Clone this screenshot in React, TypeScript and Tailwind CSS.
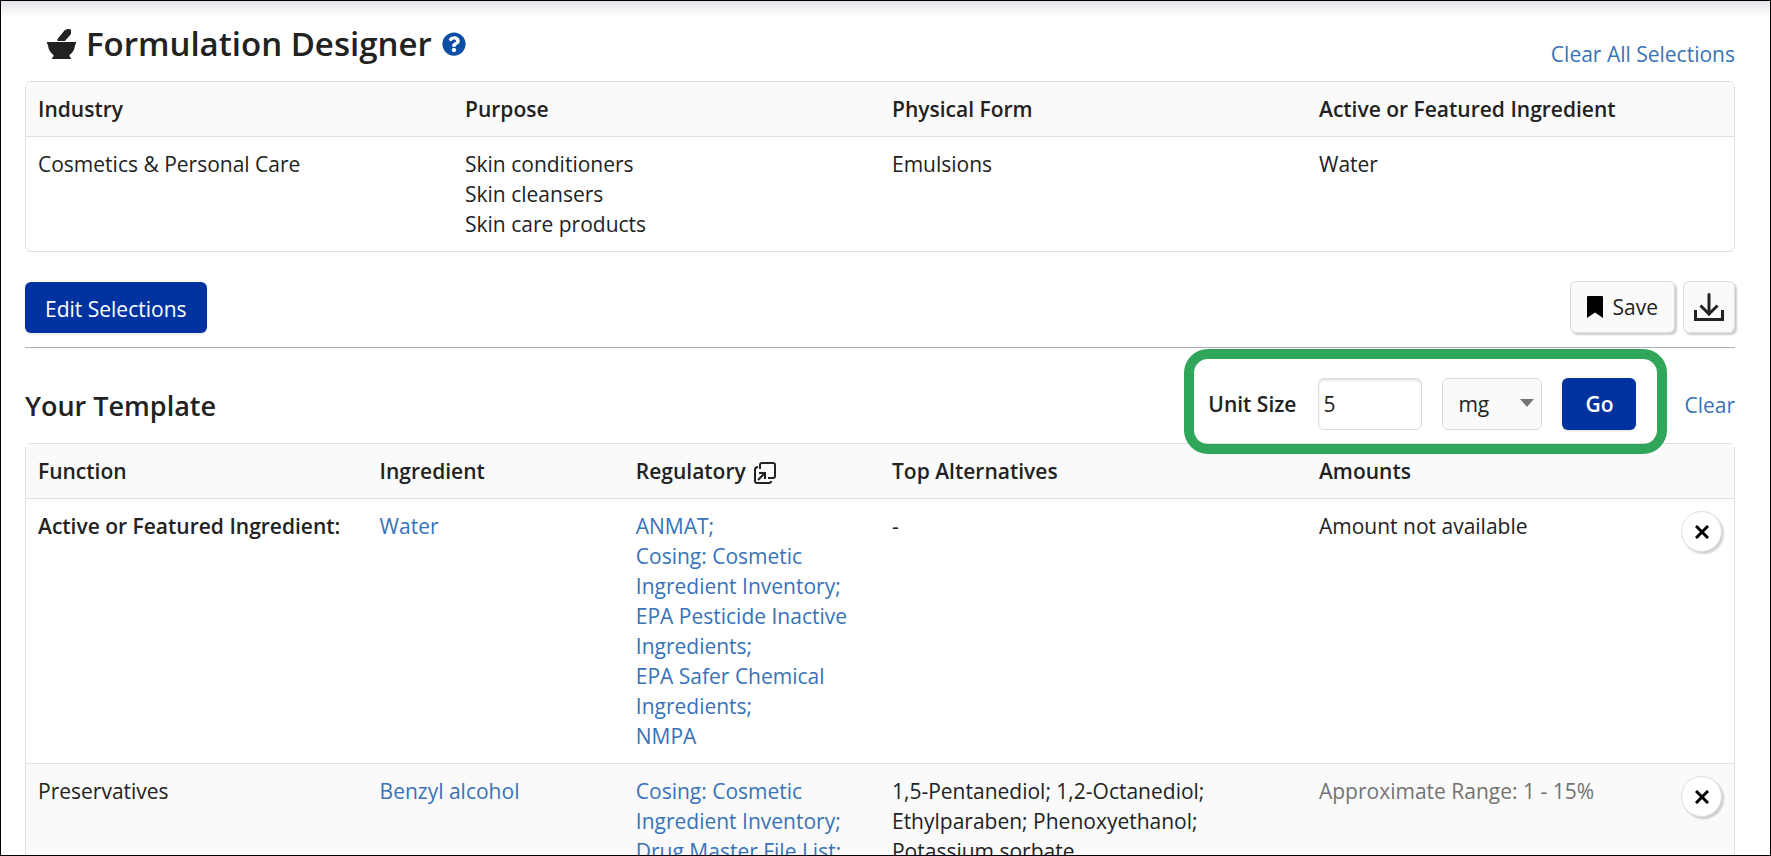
import React, { useState } from "react";
import { FaQuestionCircle } from "react-icons/fa";

interface TemplateRow {
  fn: string;
  featured?: boolean;
  ingredient: string;
  regulatory: string[];
  alternatives: string;
  amount: string;
  approximate?: boolean;
}

const selections = [
  { label: "Industry", values: ["Cosmetics & Personal Care"] },
  { label: "Purpose", values: ["Skin conditioners", "Skin cleansers", "Skin care products"] },
  { label: "Physical Form", values: ["Emulsions"] },
  { label: "Active or Featured Ingredient", values: ["Water"] },
];

const initialRows: TemplateRow[] = [
  {
    fn: "Active or Featured Ingredient:",
    featured: true,
    ingredient: "Water",
    regulatory: [
      "ANMAT;",
      "Cosing: Cosmetic Ingredient Inventory;",
      "EPA Pesticide Inactive Ingredients;",
      "EPA Safer Chemical Ingredients;",
      "NMPA",
    ],
    alternatives: "-",
    amount: "Amount not available",
  },
  {
    fn: "Preservatives",
    ingredient: "Benzyl alcohol",
    regulatory: ["Cosing: Cosmetic Ingredient Inventory;", "Drug Master File List;"],
    alternatives: "1,5-Pentanediol; 1,2-Octanediol; Ethylparaben; Phenoxyethanol; Potassium sorbate",
    amount: "Approximate Range: 1 - 15%",
    approximate: true,
  },
];

const MortarIcon = () => (
  <svg width="29" height="30" viewBox="0 0 29 30" fill="#222222" aria-hidden="true">
    <path d="M17.500 1.500Q19 0 21 0h1.500Q24 0 24 1.500V5l-6 7h-7.500V10z" />
    <path d="M0 13h29v1.500q-1 1-1.200 3-.8 5.500-5.300 8.500v1.500q1.500.5 1.500 2.500H5q0-2 1.500-2.500V26q-4.500-3-5.300-8.500Q1 15.500 0 14.500z" />
  </svg>
);

const DownloadIcon = () => (
  <svg width="30" height="28" viewBox="0 0 30 28" fill="none" stroke="#222222" strokeWidth="3" aria-hidden="true">
    <path d="M1.500 17v9.500h27V17" />
    <path d="M15 1.500V21" strokeLinecap="round" />
    <path d="M7.500 13.500 15 21l7.500-7.500" strokeLinecap="square" />
  </svg>
);

const PopoutIcon = () => (
  <svg width="22" height="22" viewBox="0 0 22 22" fill="none" stroke="#222222" strokeWidth="2" aria-hidden="true">
    <path d="M6 7V3q0-2 2-2h11q2 0 2 2v11q0 2-2 2h-5" />
    <path d="M4 5Q1 5 1 8v11q0 2 2 2h12q2 0 2-2" />
    <path d="M4 18l7-7M5 11h6v6" />
  </svg>
);

export default function App() {
  const [unitSize, setUnitSize] = useState("5");
  const [unit, setUnit] = useState("mg");
  const [rows, setRows] = useState(initialRows);

  return (
    <div className="h-screen overflow-hidden border border-black bg-white font-['Open_Sans',sans-serif] text-[21px] leading-[30px] text-[#222222]">
      <div className="h-4 bg-linear-to-b from-[#e5e2e7] to-white" />
      <main className="pl-6 pr-[35px]">
        <header className="flex h-16 items-start justify-between">
          <h1 className="flex items-center gap-2.5 pl-[22px] pt-1 text-[33px] font-semibold leading-[46px]">
            <MortarIcon />
            Formulation Designer
            <button className="text-[#0a4fa3]" aria-label="Help">
              <FaQuestionCircle className="size-6" />
            </button>
          </h1>
          <a href="#" className="pt-[22px] text-[#3873b8]">Clear All Selections</a>
        </header>

        <div className="overflow-hidden rounded-md border border-[#dee0e2]">
          <table className="w-full table-fixed text-left">
            <thead className="border-b border-[#dee0e2] bg-[#fafafa]">
              <tr>
                {selections.map((s) => (
                  <th key={s.label} className="p-3 font-semibold">{s.label}</th>
                ))}
              </tr>
            </thead>
            <tbody>
              <tr>
                {selections.map((s) => (
                  <td key={s.label} className="p-3 align-top">
                    {s.values.map((v) => (
                      <div key={v}>{v}</div>
                    ))}
                  </td>
                ))}
              </tr>
            </tbody>
          </table>
        </div>

        <div className="mt-[29px] flex items-center justify-between border-b border-[#a6adb8] pb-3.5">
          <button className="h-[51px] rounded-md bg-[#0033a0] px-5 pt-1 text-white shadow-sm">Edit Selections</button>
          <div className="flex gap-2">
            <button className="flex h-[52px] items-center gap-2.5 rounded-md border border-[#dddddd] bg-[#fafafa] px-4 shadow-[2px_2px_2px_rgba(0,0,0,0.2)]">
              <svg width="16" height="22" viewBox="0 0 16 22" aria-hidden="true">
                <path d="M1 0h14q1 0 1 1v21l-8-5.500L0 22V1q0-1 1-1z" fill="#000000" />
              </svg>
              Save
            </button>
            <button
              className="flex h-[52px] w-[52px] items-center justify-center rounded-md border border-[#dddddd] bg-[#fafafa] shadow-[2px_2px_2px_rgba(0,0,0,0.2)]"
              aria-label="Download"
            >
              <DownloadIcon />
            </button>
          </div>
        </div>

        <div className="flex h-[95px] items-start justify-between">
          <h2 className="pt-10 text-[27px] font-semibold leading-9">Your Template</h2>
          <div className="flex items-center gap-[17px]">
            <form
              className="relative mt-px flex h-[105px] items-center rounded-[24px] border-[10px] border-[#2fa65a] pl-[14px] pr-[21px] pt-1"
              onSubmit={(e) => e.preventDefault()}
            >
              <label htmlFor="unit-size" className="font-semibold">Unit Size</label>
              <input
                id="unit-size"
                value={unitSize}
                onChange={(e) => setUnitSize(e.target.value)}
                className="ml-[22px] h-[52px] w-[104px] rounded-md border border-[#dddddd] px-1 shadow-[inset_0_2px_2px_rgba(0,0,0,0.1)]"
              />
              <div className="relative ml-5">
                <select
                  aria-label="Unit"
                  value={unit}
                  onChange={(e) => setUnit(e.target.value)}
                  className="h-[52px] w-[100px] appearance-none rounded-md border border-[#dddddd] bg-[#fafafa] pl-[15px]"
                >
                  <option>mg</option>
                  <option>g</option>
                </select>
                <svg className="pointer-events-none absolute right-2 top-[21px]" width="14" height="8" viewBox="0 0 14 8" aria-hidden="true">
                  <path d="M0 0h14L7 8z" fill="#757575" />
                </svg>
              </div>
              <button className="ml-5 h-[52px] w-[74px] rounded-md bg-[#0033a0] font-semibold text-white shadow-sm">Go</button>
            </form>
            <a href="#" className="pt-2 text-[#3873b8]">Clear</a>
          </div>
        </div>

        <div className="rounded-md border border-[#dee0e2]">
          <table className="w-full table-fixed text-left">
            <colgroup>
              <col className="w-[20%]" />
              <col className="w-[15%]" />
              <col className="w-[15%]" />
              <col className="w-[25%]" />
              <col className="w-[20%]" />
              <col />
            </colgroup>
            <thead className="border-b border-[#dee0e2] bg-[#fafafa]">
              <tr>
                <th className="p-3 font-semibold">Function</th>
                <th className="p-3 font-semibold">Ingredient</th>
                <th className="p-3 font-semibold">
                  <span className="flex items-center gap-2">
                    Regulatory
                    <span className="pt-1">
                      <PopoutIcon />
                    </span>
                  </span>
                </th>
                <th className="p-3 font-semibold">Top Alternatives</th>
                <th className="p-3 font-semibold" colSpan={2}>Amounts</th>
              </tr>
            </thead>
            <tbody>
              {rows.map((row) => (
                <tr key={row.fn} className="border-b border-[#dee0e2] align-top even:bg-[#fafafa]">
                  <td className={row.featured ? "whitespace-nowrap p-3 font-semibold" : "p-3"}>{row.fn}</td>
                  <td className="p-3">
                    <a href="#" className="text-[#3873b8]">{row.ingredient}</a>
                  </td>
                  <td className="p-3">
                    {row.regulatory.map((r) => (
                      <a key={r} href="#" className="block text-[#3873b8]">{r}</a>
                    ))}
                  </td>
                  <td className="py-3 pl-3 pr-10">{row.alternatives}</td>
                  <td className={row.approximate ? "p-3 text-[#737373]" : "p-3"}>{row.amount}</td>
                  <td className="p-3">
                    <button
                      onClick={() => setRows(rows.filter((r) => r !== row))}
                      className="ml-auto flex size-[41px] items-center justify-center rounded-full border border-[#dddddd] bg-white shadow-[2px_2px_2px_rgba(0,0,0,0.18)]"
                      aria-label="Remove"
                    >
                      <svg width="14" height="14" viewBox="0 0 14 14" stroke="#000000" strokeWidth="3" aria-hidden="true">
                        <path d="M1 1l12 12M13 1 1 13" />
                      </svg>
                    </button>
                  </td>
                </tr>
              ))}
            </tbody>
          </table>
        </div>
      </main>
    </div>
  );
}
